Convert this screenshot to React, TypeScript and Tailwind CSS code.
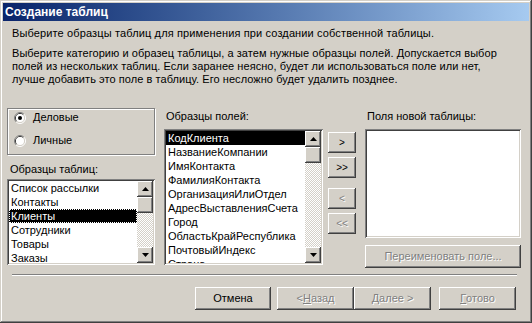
import React from 'react';

const raised =
  'shadow-[inset_-1px_-1px_0_#404040,inset_1px_1px_0_#fff,inset_-2px_-2px_0_#808080,inset_2px_2px_0_#d4d0c8]';
const sunken =
  'shadow-[inset_1px_1px_0_#808080,inset_-1px_-1px_0_#fff,inset_2px_2px_0_#404040,inset_-2px_-2px_0_#d4d0c8]';
const disabledText = 'text-[#808080] [text-shadow:1px_1px_0_#fff]';

const tables = ['Список рассылки', 'Контакты', 'Клиенты', 'Сотрудники', 'Товары', 'Заказы'];
const fields = [
  'КодКлиента',
  'НазваниеКомпании',
  'ИмяКонтакта',
  'ФамилияКонтакта',
  'ОрганизацияИлиОтдел',
  'АдресВыставленияСчета',
  'Город',
  'ОбластьКрайРеспублика',
  'ПочтовыйИндекс',
  'Страна',
];

const Radio = ({ checked }: { checked?: boolean }) => (
  <svg width="12" height="12" viewBox="0 0 12 12" className="shrink-0">
    <path d="M2.11 9.89 A5.5 5.5 0 0 1 9.89 2.11" stroke="#808080" fill="none" />
    <path d="M9.89 2.11 A5.5 5.5 0 0 1 2.11 9.89" stroke="#fff" fill="none" />
    <path d="M2.82 9.18 A4.5 4.5 0 0 1 9.18 2.82" stroke="#404040" fill="none" />
    <path d="M9.18 2.82 A4.5 4.5 0 0 1 2.82 9.18" stroke="#d4d0c8" fill="none" />
    <circle cx="6" cy="6" r="4" fill="#fff" />
    {checked && <circle cx="6" cy="6" r="2" fill="#000" />}
  </svg>
);

const Arrow = ({ down }: { down?: boolean }) => (
  <div className={`w-4 h-4 bg-[#d4d0c8] flex items-center justify-center ${raised}`}>
    <svg width="7" height="4" viewBox="0 0 7 4">
      <path d={down ? 'M0 0h7L3.5 4z' : 'M0 4h7L3.5 0z'} fill="#000" />
    </svg>
  </div>
);

const ScrollBar = () => (
  <div className="w-4 flex flex-col bg-[repeating-conic-gradient(#d4d0c8_0_25%,#fff_0_50%)] bg-[length:2px_2px]">
    <Arrow />
    <div className="flex-1">
      <div className={`w-4 h-4 bg-[#d4d0c8] ${raised}`} />
    </div>
    <Arrow down />
  </div>
);

const Btn = ({
  children,
  className = '',
  disabled,
}: {
  children: React.ReactNode;
  className?: string;
  disabled?: boolean;
}) => (
  <div
    className={`flex items-center justify-center font-normal bg-[#d4d0c8] ${raised} ${
      disabled ? disabledText : 'text-black'
    } ${className}`}
  >
    {children}
  </div>
);

export default function App() {
  return (
    <div
      className={`w-[532px] h-[323px] bg-[#d4d0c8] p-[3px] flex flex-col text-[11px] leading-[13px] text-black font-['Liberation_Sans',Arial,sans-serif] shadow-[inset_-1px_-1px_0_#404040,inset_1px_1px_0_#d4d0c8,inset_-2px_-2px_0_#808080,inset_2px_2px_0_#fff]`}
    >
      <div className="h-[18px] flex items-center pl-[2px] bg-gradient-to-r from-[#0a246a] to-[#a6caf0] text-white font-bold text-[12px]">
        Создание таблиц
      </div>

      <div className="pl-[9px] mt-[6px] tracking-[0.13px]">
        Выберите образцы таблиц для применения при создании собственной таблицы.
      </div>
      <div className="pl-[9px] mt-[7px] w-[510px] tracking-[0.06px]">
        Выберите категорию и образец таблицы, а затем нужные образцы полей. Допускается выбор
        <br />
        полей из нескольких таблиц. Если заранее неясно, будет ли использоваться поле или нет,
        <br />
        лучше добавить это поле в таблицу. Его несложно будет удалить позднее.
      </div>

      <div className="flex mt-[22px] pl-[4px]">
        {/* left column */}
        <div className="w-[148px] flex flex-col">
          <div className="h-[47px] border border-[#808080] shadow-[inset_1px_1px_0_#fff,1px_1px_0_#fff] flex flex-col gap-[10px] pt-[2px] pl-[6px]">
            <div className="flex items-center gap-[7px] h-[13px]">
              <Radio checked />
              <span>Деловые</span>
            </div>
            <div className="flex items-center gap-[7px] h-[13px]">
              <Radio />
              <span>Личные</span>
            </div>
          </div>
          <div className="mt-[8px] pl-[3px]">Образцы таблиц:</div>
          <div className={`mt-[3px] h-[86px] bg-white p-[2px] flex ${sunken}`}>
            <div className="flex-1 flex flex-col overflow-hidden">
              {tables.map((t) => (
                <div
                  key={t}
                  className={`h-[14px] shrink-0 pl-[2px] leading-[14px] whitespace-nowrap ${
                    t === 'Клиенты'
                      ? 'bg-black text-white outline-1 outline-dotted outline-white -outline-offset-1'
                      : ''
                  }`}
                >
                  {t}
                </div>
              ))}
            </div>
            <ScrollBar />
          </div>
        </div>

        {/* middle column */}
        <div className="w-[159px] ml-[9px] flex flex-col">
          <div className="mt-[2px] pl-[2px]">Образцы полей:</div>
          <div className={`mt-[6px] h-[136px] bg-white p-[2px] flex ${sunken}`}>
            <div className="flex-1 flex flex-col overflow-hidden">
              {fields.map((f, i) => (
                <div
                  key={f}
                  className={`h-[14px] shrink-0 pl-[2px] leading-[14px] whitespace-nowrap ${
                    i === 0 ? 'bg-black text-white' : ''
                  }`}
                >
                  {f}
                </div>
              ))}
            </div>
            <ScrollBar />
          </div>
        </div>

        {/* move buttons */}
        <div className="w-[28px] ml-[5px] mt-[24px] flex flex-col text-[10px]">
          <Btn className="h-[21px]">&gt;</Btn>
          <Btn className="h-[21px] mt-[4px]">&gt;&gt;</Btn>
          <Btn className="h-[21px] mt-[10px]" disabled>
            &lt;
          </Btn>
          <Btn className="h-[21px] mt-[4px]" disabled>
            &lt;&lt;
          </Btn>
        </div>

        {/* right column */}
        <div className="w-[156px] ml-[9px] flex flex-col">
          <div className="mt-[2px] pl-[2px]">Поля новой таблицы:</div>
          <div className={`mt-[6px] h-[109px] bg-white ${sunken}`} />
          <Btn className="mt-[7px] h-[23px]" disabled>
            Переименовать поле...
          </Btn>
        </div>
      </div>

      <div className="mt-[6px] ml-[9px] mr-[12px] h-[2px] border-t border-[#808080] border-b border-b-white" />

      <div className="mt-[11px] flex justify-end pr-[13px]">
        <Btn className="w-[76px] h-[23px]">Отмена</Btn>
        <Btn className="w-[77px] h-[23px] ml-[6px]" disabled>
          &lt; <span className="underline">Н</span>азад
        </Btn>
        <Btn className="w-[77px] h-[23px]" disabled>
          <span className="underline">Д</span>алее &gt;
        </Btn>
        <Btn className="w-[77px] h-[23px] ml-[8px]" disabled>
          <span className="underline">Г</span>отово
        </Btn>
      </div>
    </div>
  );
}
